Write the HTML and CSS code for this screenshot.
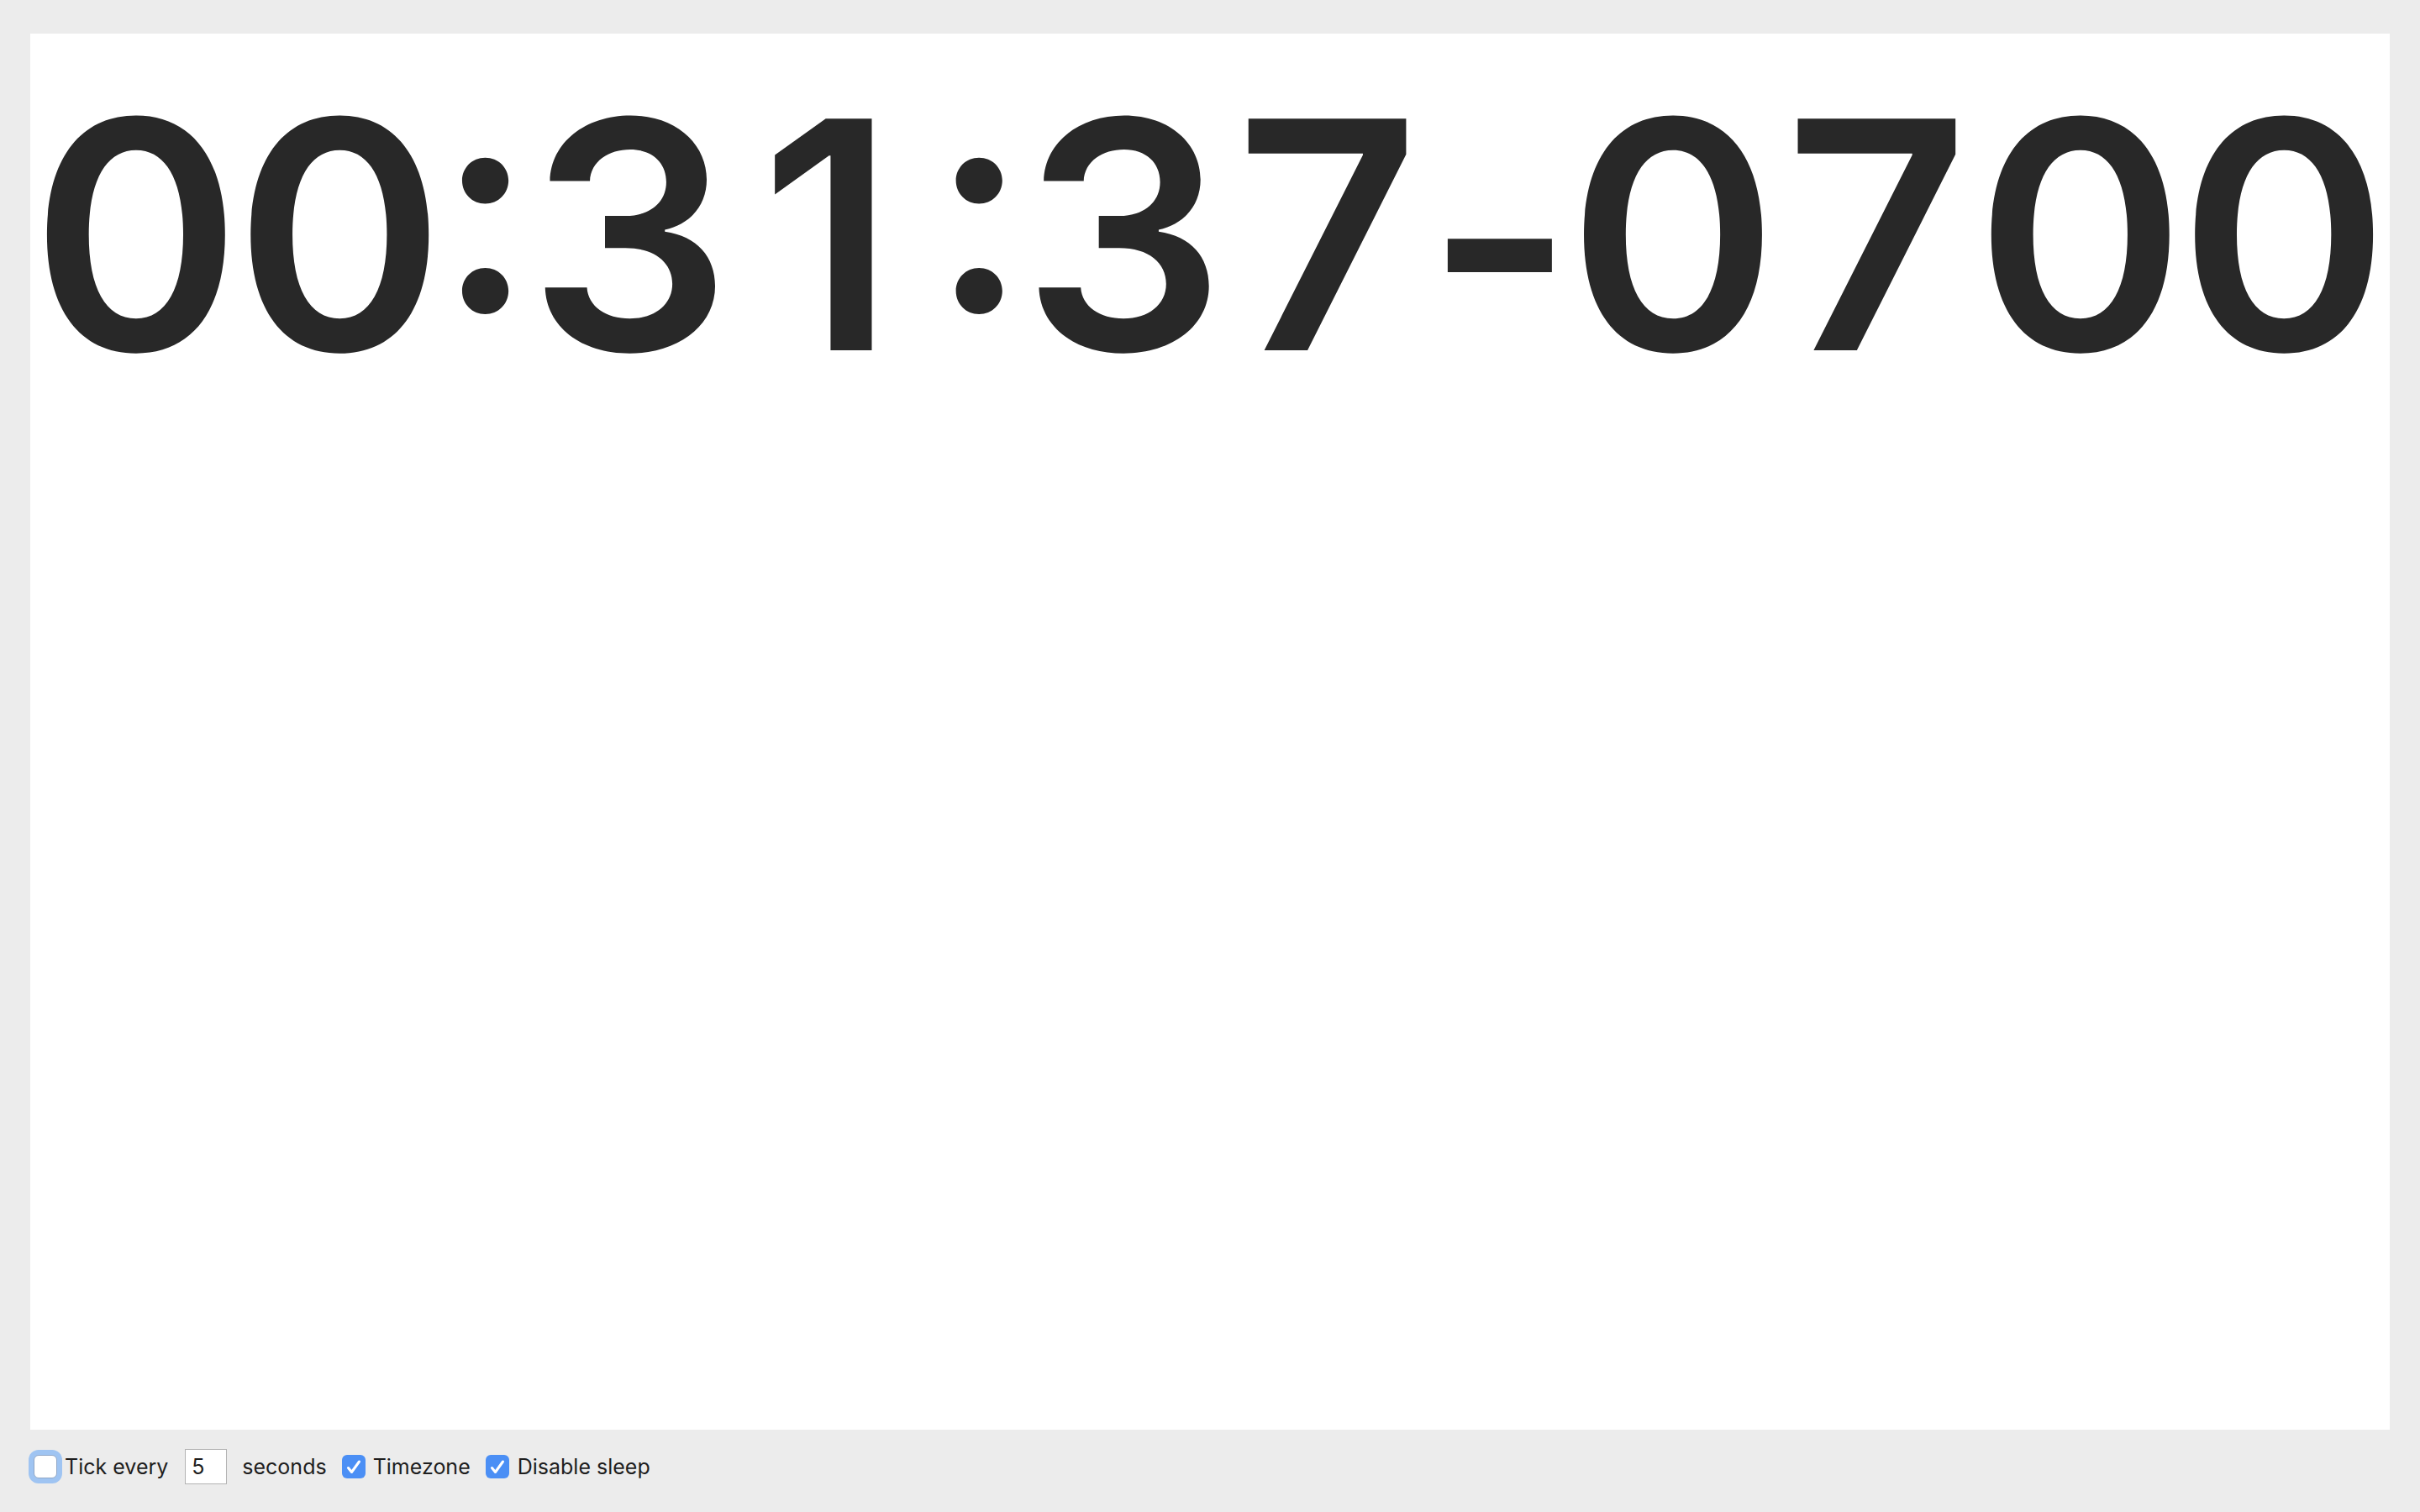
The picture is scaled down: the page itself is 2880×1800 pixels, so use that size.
FILE: index.html
```html
<!DOCTYPE html>
<html>
<head>
<meta charset="utf-8">
<link rel="stylesheet" href="styles.css">
</head>
<body>
<main class="panel">
  <div class="clock"><span class="d">0</span><span class="d">0</span><span class="c">:</span><span class="d">3</span><span class="d one">1</span><span class="c">:</span><span class="d">3</span><span class="d">7</span><span class="m">-</span><span class="d">0</span><span class="d">7</span><span class="d">0</span><span class="d">0</span></div>
</main>
<div class="controls">
  <span class="check unchecked focused"></span>
  <span class="label label-tick">Tick every</span>
  <span class="num-input">5</span>
  <span class="label label-seconds">seconds</span>
  <span class="check checked"><svg viewBox="0 0 28 28" width="28" height="28"><path d="M7.5 15.5 L11.5 20.5 L20.5 8" fill="none" stroke="#fff" stroke-width="3" stroke-linecap="round" stroke-linejoin="round"/></svg></span>
  <span class="label label-tz">Timezone</span>
  <span class="check checked"><svg viewBox="0 0 28 28" width="28" height="28"><path d="M7.5 15.5 L11.5 20.5 L20.5 8" fill="none" stroke="#fff" stroke-width="3" stroke-linecap="round" stroke-linejoin="round"/></svg></span>
  <span class="label label-sleep">Disable sleep</span>
</div>
</body>
</html>
```
FILE: styles.css
```css
html, body {
  margin: 0;
  padding: 0;
  background: #ececec;
}
body {
  width: 2880px;
  height: 1800px;
  overflow: hidden;
  font-family: Inter, "Liberation Sans", sans-serif;
}
.panel {
  margin: 40px 36px 0 36px;
  height: 1662px;
  background: #ffffff;
}
.clock {
  display: flex;
  justify-content: center;
  box-sizing: border-box;
  padding: 50px 8px 0 0;
  font-family: Inter, sans-serif;
  font-weight: 600;
  font-size: 379px;
  line-height: 1;
  color: #282828;
  white-space: nowrap;
  font-feature-settings: "calt" 0;
}
.clock span {
  display: block;
  text-align: center;
  flex: none;
}
.d { width: 242.4px; letter-spacing: -8px; }
.c { width: 102.9px; font-size: 352px; transform: translateY(-23px); }
.m { width: 169px; transform: translateY(2px); }
.one { text-indent: -14px; }
.controls {
  display: flex;
  align-items: center;
  height: 42px;
  margin-top: 23px;
  padding-left: 40px;
  font-size: 25px;
  color: #1e1e1e;
}
.check {
  width: 28px;
  height: 28px;
  box-sizing: border-box;
  border-radius: 6px;
  flex: none;
  display: flex;
}
.unchecked {
  background: #ffffff;
  border: 1px solid #8fa6c6;
}
.focused {
  box-shadow: 0 0 0 6px #9fc4f2;
}
.checked {
  background: #4b8ff5;
}
.label {
  white-space: nowrap;
}
.label-tick { margin-left: 9px; }
.num-input {
  margin-left: 20px;
  width: 50px;
  height: 42px;
  box-sizing: border-box;
  border: 1px solid #b3b3b3;
  background: #fff;
  padding-left: 7px;
  line-height: 40px;
}
.label-seconds { margin-left: 18px; margin-right: 18px; }
.label-tz { margin-left: 9px; margin-right: 18px; }
.label-sleep { margin-left: 10px; }
```
